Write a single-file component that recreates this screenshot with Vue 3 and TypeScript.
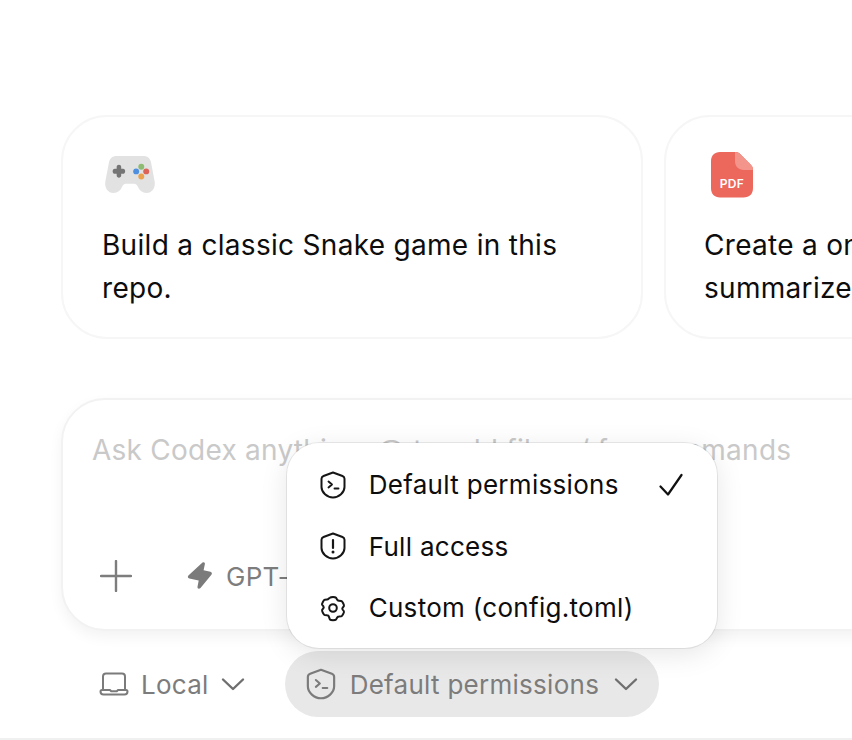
<script setup lang="ts">
interface PermissionOption {
  id: string
  label: string
  selected?: boolean
}

const options: PermissionOption[] = [
  { id: 'default', label: 'Default permissions', selected: true },
  { id: 'full', label: 'Full access' },
  { id: 'custom', label: 'Custom (config.toml)' }
]
</script>

<template>
  <div class="page">
    <section class="cards">
      <article class="card">
        <svg class="card-icon" width="52" height="40" viewBox="0 0 52 40">
          <path fill="#e2e2e2" d="M13 1h26c4 0 6.500 2 7.500 6l3.600 19c.9 6-2.600 11-8.100 11-4 0-6.500-2-8.300-6-.9-2-2-3-3.700-3h-8c-1.700 0-2.800 1-3.700 3-1.800 4-4.300 6-8.300 6-5.500 0-9-5-8.100-11L5.500 7C6.500 3 9 1 13 1z" />
          <path fill="#757575" d="M13 11.500c0-2.800 4.400-2.800 4.400 0v1.800h1.800c2.800 0 2.800 5 0 5h-1.800v1.800c0 2.800-4.400 2.800-4.400 0v-1.800h-1.800c-2.800 0-2.800-5 0-5H13z" />
          <circle cx="37" cy="11.500" r="2.900" fill="#8dbb72" />
          <circle cx="32" cy="16" r="2.900" fill="#4f8fe0" />
          <circle cx="41.800" cy="16" r="2.900" fill="#dd6258" />
          <circle cx="37" cy="21" r="2.900" fill="#eba24f" />
        </svg>
        <p class="card-text">Build a classic Snake game in this repo.</p>
      </article>
      <article class="card">
        <svg class="card-icon pdf" width="42" height="46" viewBox="0 0 42 46">
          <path fill="#ec675c" d="M9 0h15.500c2 0 3.300.6 4.700 2l10.400 10.600c1.600 1.600 2.400 3 2.400 5V36c0 6-3.500 9.500-9.500 9.500H9C3.500 45.500 0 42 0 36V9.500C0 3.500 3.500 0 9 0z" />
          <path fill="#f4958b" d="M24 0c2 0 3.700.8 5.200 2l10.400 10.600c1.300 1.300 2.200 3 2.400 5.400h-9c-5.500 0-9-3.500-9-9z" />
          <text class="pdf-label" x="21" y="36" text-anchor="middle">PDF</text>
        </svg>
        <p class="card-text">Create a one-page PDF that summarizes this app.</p>
      </article>
    </section>

    <section class="composer">
      <div class="placeholder">Ask Codex anything, @ to add files, / for commands</div>
      <div class="composer-tools">
        <svg class="plus" width="32" height="32" viewBox="0 0 32 32">
          <path d="M16 1v30M1 16h30" fill="none" stroke="#7d7d7d" stroke-width="2.400" stroke-linecap="round" />
        </svg>
        <div class="model">
          <svg width="28" height="30" viewBox="0 0 28 30">
            <path fill="#7b7b7b" d="M16.500 1.500c1.300-.8 2.700 0 2.400 1.500l-1.300 6.200 6.800 1.600c1.500.4 2 1.800 1 3L14.500 27c-1.400 1.500-3.300.8-3-1.200l1.200-6.300-9.400-2c-1.500-.4-1.900-1.800-.9-3z" />
          </svg>
          <span>GPT-5.2-Codex</span>
        </div>
      </div>
    </section>

    <footer class="status-row">
      <button class="status-btn" type="button">
        <svg width="30" height="26" viewBox="0 0 30 26">
          <path d="M4 18V5.500C4 3.500 5 2.500 7 2.500h16c2 0 3 1 3 3V18" fill="none" stroke="#7b7b7b" stroke-width="2" />
          <path d="M1.500 20.500c0-1 .5-1.500 1.500-1.500h8l1.200 1.200h5.600L19 19h8c1 0 1.500.5 1.500 1.500 0 2-1 3-3 3h-21c-2 0-3-1-3-3z" fill="none" stroke="#7b7b7b" stroke-width="2" stroke-linejoin="round" />
        </svg>
        <span>Local</span>
        <svg class="chevron" width="24" height="14" viewBox="0 0 24 14">
          <path d="M2 2.500 12 12 22 2.500" fill="none" stroke="#6f6f6f" stroke-width="2.400" stroke-linecap="round" stroke-linejoin="round" />
        </svg>
      </button>

      <div class="permissions">
        <div class="menu">
          <div v-for="option in options" :key="option.id" class="menu-item">
            <svg v-if="option.id === 'default'" width="26" height="28" viewBox="0 0 26 28">
              <path d="M13 1.500 22.500 5c1.300.5 2 1.400 2 2.800v8.200c0 5.500-5.500 10.500-11.500 10.500S1.500 21.500 1.500 16V7.800c0-1.400.7-2.300 2-2.800z" fill="none" stroke="#161616" stroke-width="2" stroke-linejoin="round" />
              <path d="M8.500 10.500 12 13.500l-3.500 3M14.500 17.500h4" fill="none" stroke="#161616" stroke-width="1.900" stroke-linecap="round" stroke-linejoin="round" />
            </svg>
            <svg v-else-if="option.id === 'full'" width="26" height="28" viewBox="0 0 26 28">
              <path d="M13 1.500 22.500 5c1.300.5 2 1.400 2 2.800v8.200c0 5.500-5.500 10.500-11.500 10.500S1.500 21.500 1.500 16V7.800c0-1.400.7-2.300 2-2.800z" fill="none" stroke="#161616" stroke-width="2" stroke-linejoin="round" />
              <path d="M13 8v8" fill="none" stroke="#161616" stroke-width="2.200" stroke-linecap="round" />
              <circle cx="13" cy="20" r="1.500" fill="#161616" />
            </svg>
            <svg v-else width="26" height="28" viewBox="0 0 26 28">
              <path d="M9.500 2.500c1-1 6-1 7 0l1.500 2.500c.5.700 1 1 1.800 1l2.700.3c1.300.2 3.500 4.500 3 5.700l-1.500 2c-.5.700-.5 1.300 0 2l1.500 2c.5 1.200-1.700 5.500-3 5.700l-2.700.3c-.8 0-1.300.3-1.800 1l-1.500 2.500c-1 1-6 1-7 0L8 23.500c-.5-.7-1-1-1.800-1l-2.700-.3c-1.300-.2-3.500-4.500-3-5.700l1.500-2c.5-.7.500-1.300 0-2L.500 10.500C0 9.300 2.200 5 3.500 4.800l2.700-.3C7 4.500 7.500 4.200 8 3.500z" transform="translate(1.700 1.600) scale(.87)" fill="none" stroke="#161616" stroke-width="2.300" stroke-linejoin="round" />
              <circle cx="13" cy="14" r="3.800" fill="none" stroke="#161616" stroke-width="2" />
            </svg>
            <span class="menu-label">{{ option.label }}</span>
            <svg v-if="option.selected" class="check" width="24" height="24" viewBox="0 0 24 24">
              <path d="M1.500 13.500 9 21.500 22.500 2" fill="none" stroke="#111" stroke-width="2.200" stroke-linecap="round" stroke-linejoin="round" />
            </svg>
          </div>
        </div>

        <button class="status-btn active" type="button">
          <svg width="30" height="32" viewBox="0 0 26 28">
            <path d="M13 1.500 22.500 5c1.300.5 2 1.400 2 2.800v8.200c0 5.500-5.500 10.500-11.500 10.500S1.500 21.500 1.500 16V7.800c0-1.400.7-2.300 2-2.800z" fill="none" stroke="#7b7b7b" stroke-width="1.900" stroke-linejoin="round" />
            <path d="M8.500 10.500 12 13.500l-3.500 3M14.500 17.500h4" fill="none" stroke="#7b7b7b" stroke-width="1.800" stroke-linecap="round" stroke-linejoin="round" />
          </svg>
          <span>Default permissions</span>
          <svg class="chevron" width="24" height="14" viewBox="0 0 24 14">
            <path d="M2 2.500 12 12 22 2.500" fill="none" stroke="#6f6f6f" stroke-width="2.400" stroke-linecap="round" stroke-linejoin="round" />
          </svg>
        </button>
      </div>
    </footer>
  </div>
</template>

<style>
html,
body {
  margin: 0;
  background: #fff;
  overflow: hidden;
}
</style>

<style scoped>
.page {
  box-sizing: border-box;
  width: 852px;
  height: 740px;
  padding: 115px 0 0 61px;
  overflow: hidden;
  background: #fff;
  border-bottom: 2px solid #f0f0f0;
  font-family: Inter, "Liberation Sans", sans-serif;
  color: #0d0d0d;
}

.cards {
  display: flex;
  gap: 21px;
  width: 1185px;
}

.card {
  box-sizing: border-box;
  flex: 0 0 582px;
  height: 224px;
  padding: 38px 38px 0 38px;
  border: 2px solid #f6f6f6;
  border-radius: 46px;
  background: #fff;
}

.card:first-child {
  padding-left: 39px;
}

.card-icon {
  display: block;
  width: 54px;
  height: 41px;
  margin: 0 0 28px 1px;
}

.card-icon.pdf {
  width: 42px;
  height: 46px;
  margin: -3px 0 26px 7px;
}

.pdf-label {
  font-family: Inter, "Liberation Sans", sans-serif;
  font-size: 12px;
  font-weight: 600;
  letter-spacing: 0.4px;
  fill: #fff;
}

.card-text {
  margin: 0;
  font-size: 28px;
  line-height: 43px;
  letter-spacing: 0.3px;
  color: #0d0d0d;
}

.composer {
  box-sizing: border-box;
  width: 1185px;
  height: 233px;
  margin-top: 59px;
  padding: 32px 29px 0;
  border: 2px solid #f2f2f2;
  border-radius: 44px;
  background: #fff;
  box-shadow: 0 6px 14px rgba(0, 0, 0, 0.05);
}

.placeholder {
  height: 36px;
  font-size: 28px;
  line-height: 36px;
  letter-spacing: 0.25px;
  color: #c9c9c9;
  white-space: nowrap;
}

.composer-tools {
  display: flex;
  align-items: center;
  gap: 54px;
  margin-top: 92px;
  padding-left: 8px;
}

.model {
  display: flex;
  align-items: center;
  gap: 12px;
  font-size: 26px;
  letter-spacing: 0.27px;
  color: #7d7d7d;
}

.status-row {
  display: flex;
  align-items: center;
  gap: 40px;
  margin-top: 20px;
  padding-left: 38px;
}

.status-btn {
  display: flex;
  align-items: center;
  gap: 12px;
  height: 66px;
  padding: 0;
  border: 0;
  background: none;
  font-family: inherit;
  font-size: 26px;
  letter-spacing: 0.27px;
  color: #7c7c7c;
}

.status-btn .chevron {
  margin-left: 0;
}

.status-btn.active {
  gap: 14px;
  padding: 0 21px 0 21px;
  border-radius: 33px;
  background: #e8e8e8;
}

.status-btn.active .chevron {
  margin-left: 1px;
}

.permissions {
  position: relative;
}

.menu {
  position: absolute;
  left: 2px;
  bottom: 69px;
  z-index: 2;
  box-sizing: border-box;
  width: 430px;
  height: 205px;
  padding: 11px 0 0 33px;
  border-radius: 32px;
  background: #fff;
  box-shadow: 0 0 0 1px rgba(0, 0, 0, 0.08), 0 6px 28px rgba(0, 0, 0, 0.1);
}

.menu-item {
  display: flex;
  align-items: center;
  gap: 23px;
  height: 61.500px;
  font-size: 26px;
  letter-spacing: 0.3px;
  color: #0d0d0d;
}

.menu-label {
  white-space: nowrap;
}

.check {
  margin-left: 17px;
}
</style>
